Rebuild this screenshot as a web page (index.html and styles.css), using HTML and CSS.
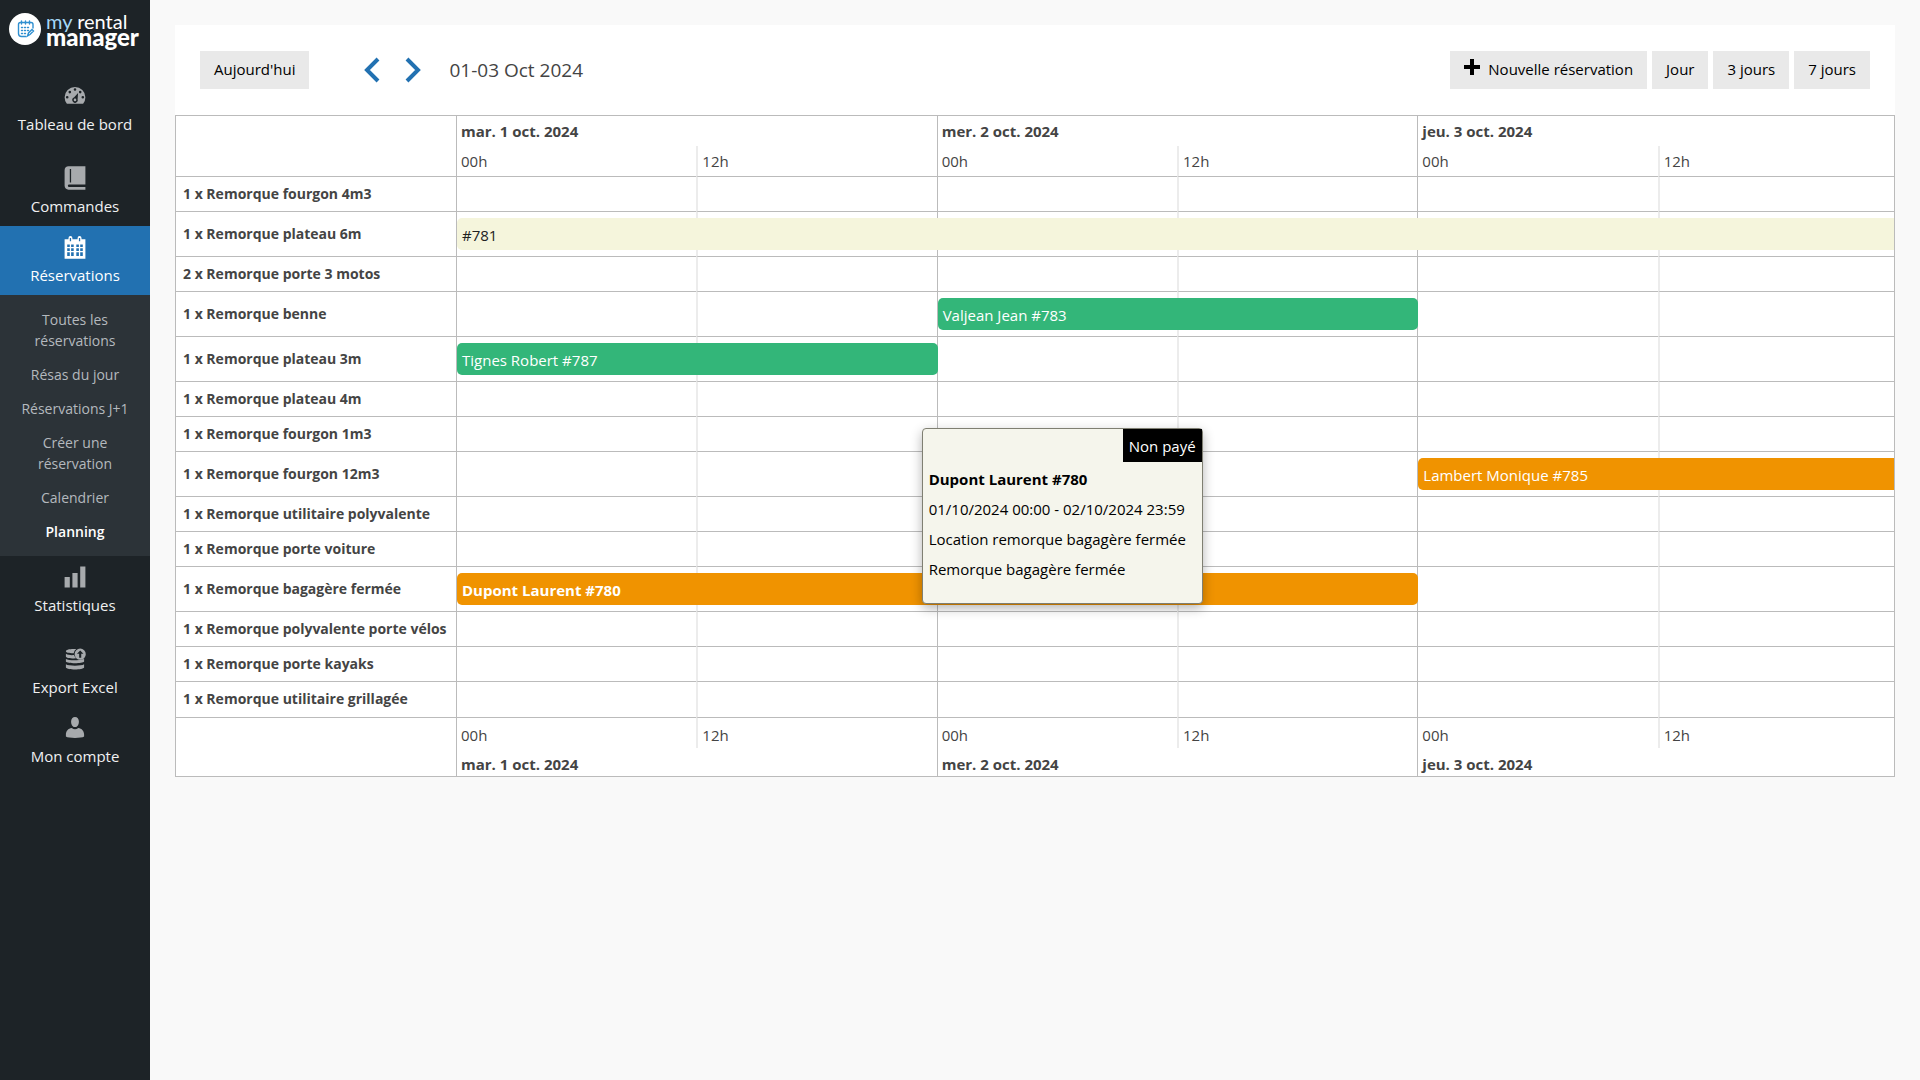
FILE: index.html
```html
<!DOCTYPE html>
<html lang="fr">
<head>
  <meta charset="UTF-8">
  <meta name="viewport" content="width=device-width, initial-scale=1.0">
  <title>Planning | My Rental Manager</title>
  <link rel="stylesheet" href="styles.css">
</head>
<body>
  <aside class="sidebar">
    <a href="#" class="logo">
      <svg class="logo-icon" viewBox="0 0 32 32">
        <circle cx="16" cy="16" r="16" fill="#fff"/>
        <g fill="none" stroke="#2f8fd0" stroke-width="1.4" stroke-linecap="round">
          <path d="M24 15V11.500Q24 9.500 22 9.500H11.500Q9.500 9.500 9.500 11.500V20.500Q9.500 23.500 12.500 23.500H17"/>
          <path d="M12.500 8v3M16.500 8v3M20.500 8v3"/>
          <path d="M12.500 14.500h9M12.500 17.500h7M12.500 20.500h5" stroke-dasharray="1 2"/>
          <path d="M18.500 23l1-3 3.500-3.500 1.500 1.500-3.500 3.500z"/>
        </g>
      </svg>
      <span class="logo-text"><span class="logo-top"><em>my</em> rental</span><strong>manager</strong></span>
    </a>

    <nav>
      <ul class="menu">
        <li class="tall">
          <a href="#">
            <svg class="icon" viewBox="0 0 20 20"><path fill-rule="evenodd" d="M3.760 16h12.480A7.900 7.900 0 0 0 18 11a8 8 0 1 0-16 0 7.900 7.900 0 0 0 1.760 5zM10 4a1 1 0 1 1 0 2 1 1 0 0 1 0-2zM6 6a1 1 0 1 1 0 2 1 1 0 0 1 0-2zm8 0a1 1 0 1 1 0 2 1 1 0 0 1 0-2zm-1.630 1.720L12 12.500a2.100 2.100 0 1 1-2.800-1.300zM4 10a1 1 0 1 1 0 2 1 1 0 0 1 0-2zm12 0a1 1 0 1 1 0 2 1 1 0 0 1 0-2zm-6 2a1 1 0 1 0 0 2 1 1 0 0 0 0-2z"/></svg>
            Tableau de bord
          </a>
        </li>
        <li>
          <a href="#">
            <svg class="icon" viewBox="0 0 20 20"><path fill-rule="evenodd" d="M5 1h13v14H5.500a1 1 0 0 0 0 2H18v2H5c-1.700 0-3-1.300-3-3V4c0-1.700 1.300-3 3-3zm1 2v10.500h1V3z"/></svg>
            Commandes
          </a>
        </li>
        <li class="current">
          <a href="#">
            <svg class="icon" viewBox="0 0 20 20"><path fill-rule="evenodd" d="M15 4h3v15H2V4h3V3a1.500 1.500 0 0 1 3 0v1h4V3a1.500 1.500 0 0 1 3 0zM6 3v2.500h1V3zm7 0v2.500h1V3zM4 8v2h2V8zm3 0v2h2V8zm4 0v2h2V8zm3 0v2h2V8zM4 11v2h2v-2zm3 0v2h2v-2zm4 0v2h2v-2zm3 0v2h2v-2zM4 14v3h2v-3zm3 0v3h2v-3zm4 0v3h2v-3zm3 0v3h2v-3z"/></svg>
            Réservations
          </a>
          <ul class="submenu">
            <li><a href="#">Toutes les réservations</a></li>
            <li><a href="#">Résas du jour</a></li>
            <li><a href="#">Réservations J+1</a></li>
            <li><a href="#">Créer une réservation</a></li>
            <li><a href="#">Calendrier</a></li>
            <li><a href="#" class="active">Planning</a></li>
          </ul>
        </li>
        <li class="tall">
          <a href="#">
            <svg class="icon" viewBox="0 0 20 20"><path d="M18 18V2h-4v16zm-6 0V7H8v11zm-6 0v-8H2v8z"/></svg>
            Statistiques
          </a>
        </li>
        <li>
          <a href="#">
            <svg class="icon" viewBox="0 0 20 20"><path d="M3 4c0-1.500 4-2 8-1.700A5 5 0 0 0 9 5.500C5 5.500 3 5 3 4zM3 6c1.500 1 4 1.200 6.200 1A5 5 0 0 0 11 9.500C7 9.800 3 9 3 8zM3 10c2 1.200 9 1.500 14 0v2c-1 1.700-13 1.700-14 0zM3 14c2 1.500 12 1.500 14 0v2.500c-1 2-13 2-14 0z"/><path fill-rule="evenodd" d="M14 2a4.300 4.300 0 1 1 0 8.600A4.300 4.300 0 0 1 14 2zm0 1.500L11.500 6h1.700v3h1.600V6h1.700z"/></svg>
            Export Excel
          </a>
        </li>
        <li>
          <a href="#">
            <svg class="icon" viewBox="0 0 20 20"><path d="M10 9.300c-2 0-3-2-3-4.300 0-2 1.200-3.500 3-3.500s3 1.500 3 3.500c0 2.300-1 4.300-3 4.300zM7.500 10q2.500 2 5 0c2.800.3 4.500 2.500 4.500 5v1.500c-2 1.500-12 1.500-14 0V15c0-2.500 1.700-4.700 4.500-5z"/></svg>
            Mon compte
          </a>
        </li>
      </ul>
    </nav>
  </aside>

  <main class="content">
    <div class="toolbar">
      <button type="button" class="btn">Aujourd'hui</button>
      <div class="arrows">
        <button type="button" class="arrow" aria-label="Précédent"><svg viewBox="0 0 16 26"><path d="M14 2L3 13l11 11"/></svg></button>
        <button type="button" class="arrow" aria-label="Suivant"><svg viewBox="0 0 16 26"><path d="M2 2l11 11L2 24"/></svg></button>
      </div>
      <h1 class="range">01-03 Oct 2024</h1>
      <div class="views">
        <button type="button" class="btn"><svg class="plus" viewBox="0 0 16 16"><path d="M8 0v16M0 8h16"/></svg>Nouvelle réservation</button>
        <button type="button" class="btn">Jour</button>
        <button type="button" class="btn">3 jours</button>
        <button type="button" class="btn">7 jours</button>
      </div>
    </div>

    <div class="planning">
      <table>
        <colgroup><col class="col-name"><col><col><col><col><col><col></colgroup>
        <thead>
          <tr><td rowspan="2"></td><th colspan="2" class="day">mar. 1 oct. 2024</th><th colspan="2" class="day">mer. 2 oct. 2024</th><th colspan="2" class="day">jeu. 3 oct. 2024</th></tr>
          <tr class="hours"><td>00h</td><td>12h</td><td>00h</td><td>12h</td><td>00h</td><td>12h</td></tr>
        </thead>
        <tbody>
          <tr><th>1 x Remorque fourgon 4m3</th><td></td><td></td><td></td><td></td><td></td><td></td></tr>
          <tr class="busy"><th>1 x Remorque plateau 6m</th><td><div class="event beige days-3">#781</div></td><td></td><td></td><td></td><td></td><td></td></tr>
          <tr><th>2 x Remorque porte 3 motos</th><td></td><td></td><td></td><td></td><td></td><td></td></tr>
          <tr class="busy"><th>1 x Remorque benne</th><td></td><td></td><td><div class="event green">Valjean Jean #783</div></td><td></td><td></td><td></td></tr>
          <tr class="busy"><th>1 x Remorque plateau 3m</th><td><div class="event green">Tignes Robert #787</div></td><td></td><td></td><td></td><td></td><td></td></tr>
          <tr><th>1 x Remorque plateau 4m</th><td></td><td></td><td></td><td></td><td></td><td></td></tr>
          <tr><th>1 x Remorque fourgon 1m3</th><td></td><td></td><td></td><td></td><td></td><td></td></tr>
          <tr class="busy"><th>1 x Remorque fourgon 12m3</th><td></td><td></td><td></td><td></td><td><div class="event orange">Lambert Monique #785</div></td><td></td></tr>
          <tr><th>1 x Remorque utilitaire polyvalente</th><td></td><td></td><td></td><td></td><td></td><td></td></tr>
          <tr><th>1 x Remorque porte voiture</th><td></td><td></td><td></td><td></td><td></td><td></td></tr>
          <tr class="busy">
            <th>1 x Remorque bagagère fermée</th>
            <td>
              <div class="event orange days-2 hovered">
                Dupont Laurent #780
                <div class="tooltip" role="tooltip">
                  <span class="status">Non payé</span>
                  <strong>Dupont Laurent #780</strong>
                  <p>01/10/2024 00:00 - 02/10/2024 23:59</p>
                  <p>Location remorque bagagère fermée</p>
                  <p>Remorque bagagère fermée</p>
                </div>
              </div>
            </td>
            <td></td><td></td><td></td><td></td><td></td>
          </tr>
          <tr><th>1 x Remorque polyvalente porte vélos</th><td></td><td></td><td></td><td></td><td></td><td></td></tr>
          <tr><th>1 x Remorque porte kayaks</th><td></td><td></td><td></td><td></td><td></td><td></td></tr>
          <tr><th>1 x Remorque utilitaire grillagée</th><td></td><td></td><td></td><td></td><td></td><td></td></tr>
        </tbody>
        <tfoot>
          <tr class="hours"><td rowspan="2"></td><td>00h</td><td>12h</td><td>00h</td><td>12h</td><td>00h</td><td>12h</td></tr>
          <tr><th colspan="2" class="day">mar. 1 oct. 2024</th><th colspan="2" class="day">mer. 2 oct. 2024</th><th colspan="2" class="day">jeu. 3 oct. 2024</th></tr>
        </tfoot>
      </table>
    </div>
  </main>
</body>
</html>
```
FILE: styles.css
```css
* {
  box-sizing: border-box;
}
body {
  margin: 0;
  display: flex;
  min-height: 100vh;
  background: #f9f9f9;
  color: #444;
  font-family: "Segoe UI", "Open Sans", sans-serif;
  font-size: 15px;
}
a {
  color: inherit;
  text-decoration: none;
}
ul {
  list-style: none;
  margin: 0;
  padding: 0;
}

/* Sidebar */
.sidebar {
  flex: none;
  width: 150px;
  background: #1d2327;
  color: #f0f0f1;
  text-align: center;
}
.logo {
  display: flex;
  align-items: center;
  gap: 5px;
  padding: 13px 0 0 9px;
  margin-bottom: 30px;
}
.logo-icon {
  width: 32px;
  height: 32px;
}
.logo-text {
  display: flex;
  flex-direction: column;
  color: #fff;
  font-family: Lato, sans-serif;
  font-size: 20px;
  line-height: 16px;
  text-align: left;
}
.logo-text em {
  color: #a5d8f8;
  font-style: normal;
}
.logo-text strong {
  font-size: 24px;
  font-weight: 900;
}
.menu > li > a {
  display: block;
  height: 69px;
  padding-top: 8px;
  line-height: 20px;
}
.menu > li.tall > a {
  height: 82px;
}
.icon {
  display: block;
  width: 26px;
  height: 26px;
  margin: 0 auto 5px;
  fill: #a7aaad;
}
.menu > li.current > a {
  background: #2271b1;
  color: #fff;
}
.current .icon {
  fill: #fff;
}
.submenu {
  padding: 8px 16px 7px;
  background: #2c3338;
  color: #b4b9be;
  font-size: 14px;
  line-height: 21px;
}
.submenu a {
  display: block;
  padding: 6px 0 7px;
}
.submenu .active {
  color: #fff;
  font-weight: 600;
}

/* Toolbar */
.content {
  flex: 1;
  min-width: 0;
  padding: 25px;
}
.toolbar {
  display: flex;
  align-items: center;
  height: 90px;
  padding: 0 25px;
  background: #fff;
}
.btn {
  height: 38px;
  padding: 0 14px 2px;
  border: 0;
  background: #e9e9e9;
  color: #000;
  font: inherit;
}
.arrows {
  display: flex;
  gap: 25px;
  margin: 0 28px 0 55px;
}
.arrow {
  width: 16px;
  height: 26px;
  padding: 0;
  border: 0;
  background: none;
}
.arrow svg,
.plus {
  fill: none;
  stroke: #2271b1;
  stroke-width: 4;
}
.arrow svg {
  display: block;
}
.plus {
  width: 16px;
  height: 16px;
  margin-right: 8px;
  stroke: #000;
}
.range {
  margin: 0;
  font-size: 19px;
  font-weight: 400;
}
.views {
  display: flex;
  gap: 5px;
  margin-left: auto;
}

/* Planning */
.planning {
  overflow: hidden;
  border: solid #bbb;
  border-width: 1px 1px 0 1px;
  background: #fff;
}
/* slightly wider than its frame, the last hours run under the edge */
table {
  width: calc(100% + 4px);
  table-layout: fixed;
  border-spacing: 0;
}
.col-name {
  width: 280px;
}
th,
td {
  height: 30px;
  padding: 0 4px;
  font-weight: 400;
  text-align: left;
}
.day {
  font-weight: 700;
}
.day,
tbody td:nth-child(even),
.hours td {
  border-left: 1px solid #bbb;
}
thead .hours td {
  height: 31px;
}
tfoot td,
tfoot th {
  padding-top: 3px;
}
tfoot .day {
  height: 29px;
}
tbody th,
tbody td {
  height: 35px;
  padding: 0;
  border-bottom: 1px solid #bbb;
}
tbody th {
  padding: 0 0 2px 7px;
  font-size: 14px;
  font-weight: 700;
  white-space: nowrap;
}
tbody tr:last-child th {
  height: 36px;
}
.busy th,
.busy td {
  height: 45px;
}
thead .hours td,
thead td[rowspan],
tfoot .day,
tfoot td[rowspan] {
  border-bottom: 1px solid #bbb;
}
tbody td:nth-child(odd),
thead .hours td:nth-child(even),
tfoot .hours td:nth-child(odd) {
  border-left: 2px solid #ececec;
}
tfoot .hours td[rowspan] {
  border-left: 0;
}
.event {
  position: relative;
  z-index: 1;
  width: calc(200% + 2px);
  height: 32px;
  padding: 0 5px;
  border-radius: 5px;
  color: #fff;
  line-height: 35px;
  white-space: nowrap;
}
.days-2 {
  width: calc(400% + 4px);
}
.days-3 {
  width: calc(600% + 6px);
}
.beige {
  background: #f5f5dc;
  color: #222;
}
.green {
  background: #33b679;
}
.orange {
  background: #f09300;
}
.hovered {
  z-index: 2;
  font-weight: 700;
}
.tooltip {
  position: absolute;
  bottom: 1px;
  left: calc(50% - 16px);
  min-width: 281px;
  padding: 0 6px 19px;
  border: 1px solid #7f7f72;
  border-radius: 4px;
  background: #f5f5ec;
  box-shadow: 0 4px 12px rgba(0, 0, 0, 0.3);
  color: #000;
  font-weight: 400;
  line-height: 30px;
}
.tooltip strong,
.tooltip p {
  display: block;
  margin: 0;
}
.status {
  display: block;
  width: max-content;
  height: 33px;
  margin: 0 -6px 2px auto;
  padding: 0 6px;
  background: #000;
  color: #fff;
  line-height: 34px;
}
```
